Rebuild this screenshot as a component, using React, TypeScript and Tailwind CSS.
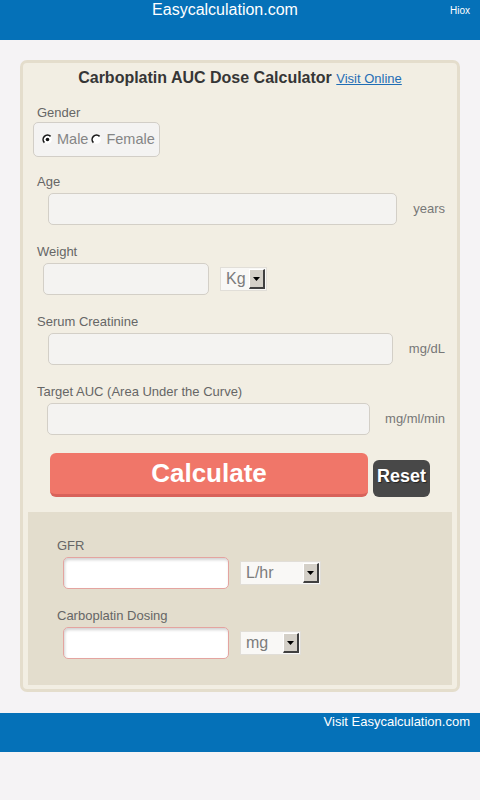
import React from "react";

function Radio({ checked }: { checked?: boolean }) {
  return (
    <svg width="11" height="11" viewBox="0 0 11 11" className="shrink-0">
      <circle cx="5.5" cy="5.5" r="4.3" fill="#ffffff" />
      <path d="M2.4 8.6 A4.3 4.3 0 0 1 8.6 2.4" fill="none" stroke="#1a1a1a" strokeWidth="1.6" />
      {checked && <circle cx="5.5" cy="5.5" r="1.8" fill="#111111" />}
    </svg>
  );
}

function ArrowBox() {
  return (
    <div className="w-[16px] h-[20px] bg-[#d4d0c8] border-t border-l border-t-white border-l-white border-b-2 border-r-2 border-b-[#404040] border-r-[#404040] flex items-center justify-center">
      <svg width="7" height="4" viewBox="0 0 7 4">
        <path d="M0 0 L7 0 L3.5 4 Z" fill="#000" />
      </svg>
    </div>
  );
}

function FakeSelect({ value, width }: { value: string; width: string }) {
  return (
    <div
      className={`${width} h-[24px] flex items-center justify-between border border-[#e1ded8] bg-[#f9f8f6] pl-[5px] pr-[1px] text-[16px] text-[#7c7c7c] leading-none`}
    >
      <span>{value}</span>
      <ArrowBox />
    </div>
  );
}

function Label({ children }: { children: React.ReactNode }) {
  return <div className="text-[13px] leading-[15px] text-[#666]">{children}</div>;
}

function InputRow({ label, unit, ml, gap }: { label: string; unit: string; ml: string; gap: string }) {
  return (
    <div className="mt-[19px]">
      <Label>{label}</Label>
      <div className="mt-[4px] flex items-center">
        <div className={`${ml} flex-1 h-[32px] rounded-[5px] border border-[#d3cfc7] bg-[#f4f3f1]`} />
        <span className={`${gap} text-[13px] text-[#777]`}>{unit}</span>
      </div>
    </div>
  );
}

function ResultRow({ label, select, selectW, first }: { label: string; select: string; selectW: string; first?: boolean }) {
  return (
    <div className={first ? "" : "mt-[19px]"}>
      <Label>{label}</Label>
      <div className="mt-[4px] flex items-center">
        <div className="ml-[6px] w-[166px] h-[32px] rounded-[5px] border border-[#e4a4a0] bg-white shadow-[inset_1px_2px_3px_rgba(0,0,0,0.18)]" />
        <div className="ml-[11px]">
          <FakeSelect value={select} width={selectW} />
        </div>
      </div>
    </div>
  );
}

export default function App() {
  return (
    <div className="min-h-screen w-full bg-[#f5f3f5] font-['Liberation_Sans',Arial,sans-serif]">
      {/* Header */}
      <header className="h-[40px] bg-[#0571b8] flex items-start">
        <div className="flex-1 text-center text-white text-[16px] leading-[20px]">Easycalculation.com</div>
        <div className="w-[30px] pt-[5px] text-[10px] leading-[12px] text-white">Hiox</div>
      </header>

      {/* Calculator card */}
      <main className="mx-[20px] mt-[20px] rounded-[7px] border-[3px] border-[#e4ddcc] bg-[#f2eee3] pb-[4px]">
        <div className="pl-[14px] pr-[12px]">
          <h1 className="pt-[5px] text-center leading-[20px] -ml-[14px] -mr-[12px]">
            <span className="text-[16px] font-bold text-[#363636]">Carboplatin AUC Dose Calculator</span>{" "}
            <a className="text-[13px] text-[#1f6db5] underline">Visit Online</a>
          </h1>

          <div className="mt-[16px]">
            <Label>Gender</Label>
            <div className="mt-[2px] -ml-[4px] w-[127px] h-[35px] rounded-[5px] border border-[#d2cec7] bg-[#f4f3f2] flex items-center pl-[8px] text-[14.5px] text-[#858585]">
              <Radio checked />
              <span className="ml-[4px]">Male</span>
              <span className="ml-[3px]">
                <Radio />
              </span>
              <span className="ml-[4px]">Female</span>
            </div>
          </div>

          <div className="mt-[-2px]">
            <InputRow label="Age" unit="years" ml="ml-[11px]" gap="ml-[16px]" />
          </div>

          <div className="mt-[19px]">
            <Label>Weight</Label>
            <div className="mt-[4px] flex items-center">
              <div className="ml-[6px] w-[166px] h-[32px] rounded-[5px] border border-[#d3cfc7] bg-[#f4f3f1]" />
              <div className="ml-[11px]">
                <FakeSelect value="Kg" width="w-[47px]" />
              </div>
            </div>
          </div>

          <InputRow label="Serum Creatinine" unit="mg/dL" ml="ml-[11px]" gap="ml-[16px]" />
          <InputRow label="Target AUC (Area Under the Curve)" unit="mg/ml/min" ml="ml-[10px]" gap="ml-[15px]" />

          <div className="mt-[18px] flex items-end">
            <button className="ml-[13px] w-[318px] h-[44px] rounded-[6px] bg-[#f07669] border-b-[3px] border-[#d8625a] text-white text-[26px] font-bold leading-[40px] pb-[1px]">
              Calculate
            </button>
            <button className="ml-[5px] w-[57px] h-[37px] rounded-[6px] bg-[#484848] text-white text-[18px] font-bold leading-[20px] pb-[5px] [text-shadow:1px_1px_1px_rgba(0,0,0,0.5)]">
              Reset
            </button>
          </div>
        </div>

        {/* Results */}
        <section className="mx-[5px] mt-[15px] bg-[#e3ddcd] pl-[29px] pt-[26px] pb-[26px]">
          <ResultRow label="GFR" select="L/hr" selectW="w-[81px]" first />
          <ResultRow label="Carboplatin Dosing" select="mg" selectW="w-[61px]" />
        </section>
      </main>

      {/* Footer */}
      <footer className="mt-[21px] h-[39px] bg-[#0571b8] pt-[1px] pr-[10px] text-right text-[13px] leading-[15px] text-white">
        Visit Easycalculation.com
      </footer>
    </div>
  );
}
